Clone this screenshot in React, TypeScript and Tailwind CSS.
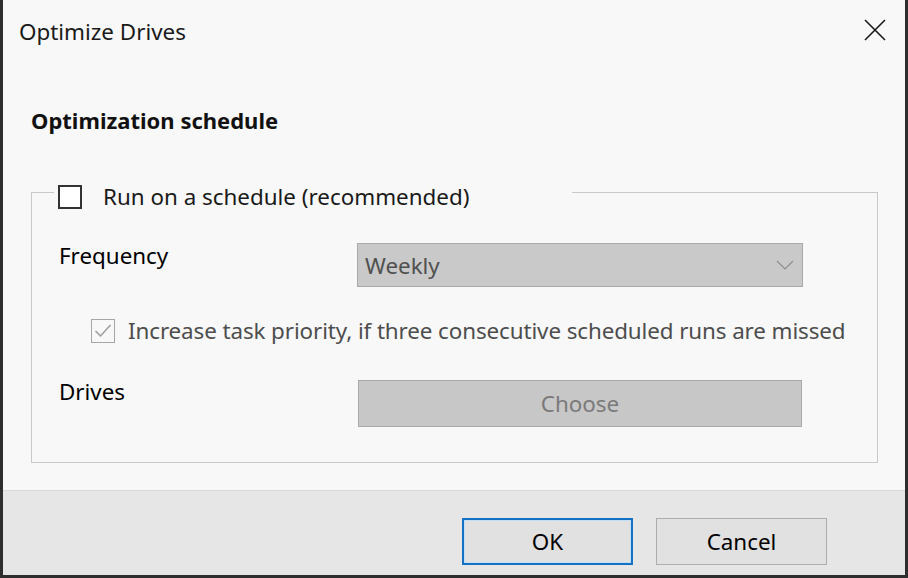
import React from "react";

const font = { fontFamily: '"Noto Sans", "Open Sans", sans-serif' };

const CloseIcon = () => (
  <svg width="22" height="22" viewBox="0 0 22 22" fill="none">
    <path d="M1 1 L21 21 M21 1 L1 21" stroke="#1a1a1a" strokeWidth="1.6" />
  </svg>
);

const Chevron = () => (
  <svg width="18" height="10" viewBox="0 0 18 10" fill="none">
    <path d="M1 1 L9 9 L17 1" stroke="#8c8c8c" strokeWidth="1.1" />
  </svg>
);

const CheckMark = () => (
  <svg width="22" height="22" viewBox="0 0 22 22" fill="none">
    <path d="M3.5 11 L8.5 16 L18.5 5" stroke="#9c9c9c" strokeWidth="1.5" />
  </svg>
);

export default function App() {
  return (
    <div
      style={font}
      className="w-[908px] h-[578px] bg-[#f8f8f8] border-x-[3px] border-b-[3px] border-[#2e2e2e] flex flex-col text-[22.4px] leading-[28px] text-[#1a1a1a]"
    >
      {/* title bar */}
      <div className="flex items-start justify-between pt-[18px] pl-[16px] pr-[19px]">
        <span>Optimize Drives</span>
        <span className="mt-[1px]">
          <CloseIcon />
        </span>
      </div>

      <h2 className="mt-[60px] ml-[28px] font-bold text-[22px] text-[#111]">Optimization schedule</h2>

      <fieldset className="mt-[39px] ml-[28px] mr-[27px] border border-[#c9c9c9]">
        <legend className="ml-[22px] pt-[10px] pl-[4px] pr-[103px] flex items-center gap-[21px]">
          <span className="w-[24px] h-[24px] border-2 border-[#333] bg-white" />
          <span>Run on a schedule (recommended)</span>
        </legend>

        <div className="pl-[27px] pt-[32px] pb-[35px] grid grid-cols-[298px_446px] text-black">
          <span className="-mt-[1px]">Frequency</span>
          <div className="h-[44px] bg-[#c9c9c9] border border-[#a9a9a9] flex items-center justify-between pl-[7px] pr-[8px]">
            <span className="text-[#505050] mt-[2px]">Weekly</span>
            <Chevron />
          </div>

          <div className="col-span-2 mt-[30px] ml-[32px] flex items-center gap-[13px] whitespace-nowrap tracking-[-0.1px]">
            <span className="w-[24px] h-[24px] shrink-0 border border-[#a6a6a6] flex items-center justify-center">
              <CheckMark />
            </span>
            <span className="text-[#4d4d4d]">
              Increase task priority, if three consecutive scheduled runs are missed
            </span>
          </div>

          <span className="mt-[33px]">Drives</span>
          <div className="mt-[35px] ml-[1px] w-[444px] h-[47px] bg-[#c7c7c7] border border-[#a9a9a9] flex items-center justify-center">
            <span className="text-[#7a7a7a]">Choose</span>
          </div>
        </div>
      </fieldset>

      <div className="mt-auto h-[85px] bg-[#e6e6e6] border-t border-[#d9d9d9] flex justify-end items-start gap-[23px] pt-[27px] pr-[78px]">
        <button className="w-[171px] h-[47px] bg-[#e1e1e1] border-2 border-[#1670c4] shadow-[inset_0_0_0_1px_#bfe0f7] text-black">
          OK
        </button>
        <button className="w-[171px] h-[47px] bg-[#e1e1e1] border border-[#adadad] text-black">
          Cancel
        </button>
      </div>
    </div>
  );
}
